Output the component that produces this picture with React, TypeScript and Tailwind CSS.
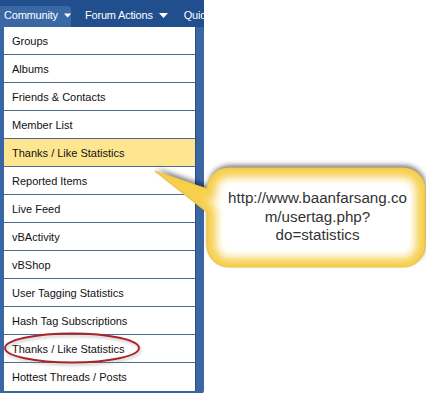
import React from "react";

const items = [
  "Groups",
  "Albums",
  "Friends & Contacts",
  "Member List",
  "Thanks / Like Statistics",
  "Reported Items",
  "Live Feed",
  "vBActivity",
  "vBShop",
  "User Tagging Statistics",
  "Hash Tag Subscriptions",
  "Thanks / Like Statistics",
  "Hottest Threads / Posts",
];

const P =
  "M229 168 L403 168 A22 22 0 0 1 425 190 L425 245 A22 22 0 0 1 403 267 L229 267 A22 22 0 0 1 207 245 L207 212 L155 171 L207 189 A22 22 0 0 1 229 168 Z";

function Tri() {
  return (
    <svg width="9" height="5" viewBox="0 0 9 5" className="ml-[6px]">
      <path d="M0 0 L9 0 L4.5 5 Z" fill="#ffffff" />
    </svg>
  );
}

export default function App() {
  return (
    <div
      className="relative w-[426px] h-[393px] bg-white overflow-hidden"
      style={{ fontFamily: '"Liberation Sans", Arial, sans-serif' }}
    >
      <div className="w-[204px] flex flex-col">
        {/* top nav bar */}
        <div className="h-[27px] bg-[#214e8c] flex items-end text-white text-[11px] tracking-[-0.2px] overflow-hidden whitespace-nowrap">
          <div className="h-[21px] w-[71px] bg-[#3a68a5] rounded-tr-[4px] flex items-center pl-[4px] pb-[2px]">
            <span>Community</span>
            <Tri />
          </div>
          <div className="h-[21px] flex items-center pl-[14px] pb-[2px]">
            <span>Forum Actions</span>
            <Tri />
          </div>
          <div className="h-[21px] flex items-center pl-[16px] pb-[2px]">
            <span>Quick Links</span>
          </div>
        </div>
        {/* dropdown */}
        <div className="bg-[#3a67a3] pl-[4px] pr-[8px] pb-[3px] rounded-br-[4px] rounded-bl-[2px]">
          <div className="bg-white border-r border-[#2c4f80]">
            {items.map((t, i) => (
              <div
                key={i}
                className={
                  "h-[28px] flex items-center pl-[8px] pt-[1px] text-[11px] text-[#111] " +
                  (i < items.length - 1 ? "border-b border-[#4f6b8c] " : "") +
                  (i === 4 ? "bg-[#fde68f]" : "bg-white")
                }
              >
                {t}
              </div>
            ))}
          </div>
        </div>
      </div>

      {/* overlay drawings */}
      <svg
        width="426"
        height="393"
        className="absolute left-0 top-0 pointer-events-none"
      >
        <defs>
          <clipPath id="cb">
            <path d={P} />
          </clipPath>
          <filter id="glow" x="-20%" y="-20%" width="140%" height="140%">
            <feGaussianBlur stdDeviation="4.5" />
          </filter>
          <filter id="sh" x="-20%" y="-30%" width="140%" height="160%">
            <feGaussianBlur stdDeviation="2.5" />
          </filter>
          <filter id="esh" x="-20%" y="-50%" width="140%" height="200%">
            <feGaussianBlur stdDeviation="1.5" />
          </filter>
        </defs>
        <path d={P} fill="#000" opacity="0.5" transform="translate(1,-3)" filter="url(#sh)" />
        <path d={P} fill="#ffffff" />
        <g clipPath="url(#cb)">
          <path d={P} fill="none" stroke="#f6cf4c" strokeWidth="18" filter="url(#glow)" />
        </g>
        <path d={P} fill="none" stroke="#eec445" strokeWidth="1.2" />

        <ellipse cx="73" cy="350" rx="67" ry="14.5" fill="none" stroke="#888" strokeWidth="2" opacity="0.5" filter="url(#esh)" />
        <ellipse cx="72" cy="348" rx="67" ry="14.5" fill="none" stroke="#a9232b" strokeWidth="1.8" />
      </svg>

      <div className="absolute left-[208px] top-[169px] w-[219px] h-[99px] flex flex-col items-center justify-center text-[15.2px] leading-[18.5px] text-[#333] pb-[3px]">
        <span>http://www.baanfarsang.co</span>
        <span>m/usertag.php?</span>
        <span>do=statistics</span>
      </div>
    </div>
  );
}
